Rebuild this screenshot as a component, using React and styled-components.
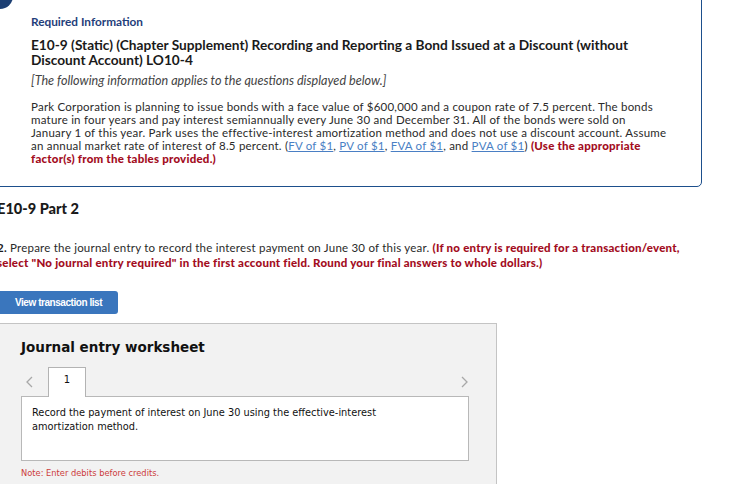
import React from "react";
import styled, { createGlobalStyle } from "styled-components";

const Global = createGlobalStyle`
  html, body { margin: 0; padding: 0; background: #fff; overflow: hidden; }
  body { width: 746px; height: 484px; }
`;

const Page = styled.div`
  font-family: Lato, "Open Sans", sans-serif;
  color: #222;
`;

const InfoCard = styled.div`
  position: relative;
  box-sizing: border-box;
  width: 722px;
  margin: -10px 0 0 -20px;
  padding: 24px 20px 21px 50px;
  border: 1px solid #1d4f8c;
  border-radius: 5px;
`;

const Badge = styled.div`
  position: absolute;
  left: 6px;
  top: -8px;
  width: 26px;
  height: 26px;
  border-radius: 50%;
  background: #1c3f73;
`;

const Kicker = styled.div`
  font-size: 11.8px;
  line-height: 14px;
  font-weight: 700;
  color: #1f3e7a;
`;

const Title = styled.div`
  margin-top: 7.5px;
  font-size: 13.7px;
  line-height: 15px;
  font-weight: 700;
  color: #1a1a1a;
  white-space: nowrap;
`;

const Note = styled.div`
  margin-top: 7px;
  font-size: 12.6px;
  line-height: 14px;
  font-style: italic;
  color: #444;
`;

const Body = styled.div`
  margin-top: 12.5px;
  font-size: 11.5px;
  letter-spacing: 0.22px;
  line-height: 13px;
  color: #2a2a2a;
  white-space: nowrap;
`;

const Link = styled.a`
  color: #4a7fc4;
  text-decoration: underline;
`;

const Warn = styled.span`
  color: #a30d1e;
  font-weight: 900;
`;

const Section = styled.div`
  margin-left: -3px;
`;

const PartHeading = styled.div`
  margin-top: 13px;
  font-size: 14.6px;
  line-height: 18px;
  font-weight: 900;
  color: #1a1a1a;
`;

const Question = styled.div`
  margin-top: 23px;
  font-size: 11.5px;
  letter-spacing: 0.22px;
  line-height: 14.5px;
  color: #2a2a2a;
  white-space: nowrap;
  b { font-weight: 700; color: #1a1a1a; }
`;

const Button = styled.button`
  display: block;
  margin-top: 21px;
  width: 121px;
  height: 23px;
  padding: 0 0 0 18px;
  text-align: left;
  border: none;
  border-radius: 3px;
  background: #3a76bd;
  color: #fff;
  font-family: "Liberation Sans", Arial, sans-serif;
  font-weight: 700;
  font-size: 10px;
  letter-spacing: -0.45px;
`;

const Panel = styled.div`
  margin-top: 9px;
  width: 500px;
  height: 200px;
  box-sizing: border-box;
  border: 1px solid #c4c4c4;
  background: #f2f2f2;
  padding: 14px 0 0 23px;
  font-family: "DejaVu Sans", Verdana, sans-serif;
`;

const PanelTitle = styled.div`
  font-size: 13.5px;
  line-height: 18px;
  font-weight: 700;
  color: #111;
`;

const TabRow = styled.div`
  margin-top: 11px;
  width: 448px;
  display: flex;
  align-items: center;
  height: 29px;
`;

const Chevron = styled.span`
  display: flex;
  align-items: center;
  justify-content: center;
  width: ${(p) => p.$w}px;
  margin-left: ${(p) => p.$ml || 0}px;
  color: #a8a8a8;
`;

const Tab = styled.div`
  box-sizing: border-box;
  width: 38px;
  height: 30px;
  margin-left: 12px;
  align-self: flex-start;
  background: #fff;
  border: 1px solid #b3b3b3;
  border-bottom: none;
  position: relative;
  z-index: 1;
  display: flex;
  justify-content: center;
  padding-top: 6px;
  font-size: 10px;
  color: #111;
`;

const Spacer = styled.div`
  flex: 1;
`;

const Prompt = styled.div`
  box-sizing: border-box;
  width: 448px;
  height: 65px;
  background: #fff;
  border: 1px solid #b8b8b8;
  padding: 9px 10px 0 10px;
  font-size: 9.8px;
  line-height: 14px;
  color: #111;
`;

const Hint = styled.div`
  margin-top: 6px;
  font-size: 8.3px;
  line-height: 12px;
  color: #cc3c3c;
`;

const ChevronIcon = ({ dir }) => (
  <svg width="7" height="12" viewBox="0 0 7 12">
    <polyline
      points={dir === "left" ? "6,1 1,6 6,11" : "1,1 6,6 1,11"}
      fill="none"
      stroke="currentColor"
      strokeWidth="1.3"
    />
  </svg>
);

export default function App() {
  return (
    <Page>
      <Global />
      <InfoCard>
        <Badge />
        <Kicker>Required Information</Kicker>
        <Title>
          E10-9 (Static) (Chapter Supplement) Recording and Reporting a Bond Issued at a Discount (without
          <br />
          Discount Account) LO10-4
        </Title>
        <Note>[The following information applies to the questions displayed below.]</Note>
        <Body>
          Park Corporation is planning to issue bonds with a face value of $600,000 and a coupon rate of 7.5 percent. The bonds
          <br />
          mature in four years and pay interest semiannually every June 30 and December 31. All of the bonds were sold on
          <br />
          January 1 of this year. Park uses the effective-interest amortization method and does not use a discount account. Assume
          <br />
          an annual market rate of interest of 8.5 percent. (<Link>FV of $1</Link>, <Link>PV of $1</Link>,{" "}
          <Link>FVA of $1</Link>, and <Link>PVA of $1</Link>) <Warn>(Use the appropriate</Warn>
          <br />
          <Warn>factor(s) from the tables provided.)</Warn>
        </Body>
      </InfoCard>
      <Section>
        <PartHeading>E10-9 Part 2</PartHeading>
        <Question>
          <b>2.</b> Prepare the journal entry to record the interest payment on June 30 of this year.{" "}
          <Warn>(If no entry is required for a transaction/event,</Warn>
          <br />
          <Warn>select "No journal entry required" in the first account field. Round your final answers to whole dollars.)</Warn>
        </Question>
        <Button>View transaction list</Button>
        <Panel>
          <PanelTitle>Journal entry worksheet</PanelTitle>
          <TabRow>
            <Chevron $w={14} $ml={1}>
              <ChevronIcon dir="left" />
            </Chevron>
            <Tab>1</Tab>
            <Spacer />
            <Chevron $w={10} $ml={0}>
              <ChevronIcon dir="right" />
            </Chevron>
          </TabRow>
          <Prompt>
            Record the payment of interest on June 30 using the effective-interest
            <br />
            amortization method.
          </Prompt>
          <Hint>Note: Enter debits before credits.</Hint>
        </Panel>
      </Section>
    </Page>
  );
}
